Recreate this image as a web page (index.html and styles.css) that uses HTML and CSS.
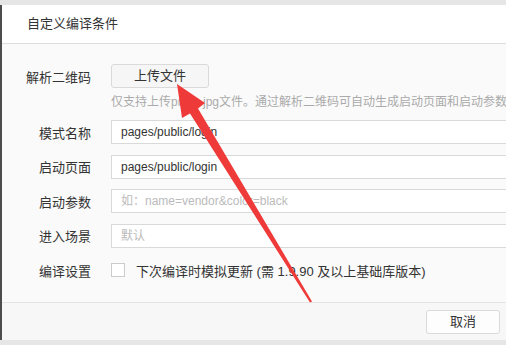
FILE: index.html
```html
<!doctype html>
<html>
<head>
    <meta charset="utf-8">
    <title>自定义编译条件</title>
    <link rel="stylesheet" href="styles.css">
</head>

<body>
<div class="dialog">
    <div class="dialog_hd">自定义编译条件</div>
    <div class="dialog_bd">
        <div class="row">
            <label class="row_label">解析二维码</label>
            <div class="row_ctrl">
                <a href="javascript:;" class="btn btn_upload">上传文件</a>
            </div>
        </div>
        <p class="hint">仅支持上传png、jpg文件。通过解析二维码可自动生成启动页面和启动参数</p>
        <div class="row">
            <label class="row_label">模式名称</label>
            <input class="ipt" type="text" value="pages/public/login">
        </div>
        <div class="row">
            <label class="row_label">启动页面</label>
            <input class="ipt" type="text" value="pages/public/login">
        </div>
        <div class="row">
            <label class="row_label">启动参数</label>
            <input class="ipt" type="text" placeholder="如：name=vendor&color=black">
        </div>
        <div class="row">
            <label class="row_label">进入场景</label>
            <input class="ipt" type="text" placeholder="默认">
        </div>
        <div class="row">
            <label class="row_label">编译设置</label>
            <div class="row_ctrl check">
                <span class="check_box"></span>
                <span>下次编译时模拟更新 (需 1.9.90 及以上基础库版本)</span>
            </div>
        </div>
    </div>
    <div class="dialog_ft">
        <a href="javascript:;" class="btn">取消</a>
    </div>
</div>

<!--标注箭头-->
<svg class="mark" width="506" height="345" viewBox="0 0 506 345">
    <polygon fill="#ef3a3a" points="177,84 205,103 198,108.5 312,301.5 310,302.5 190,113.5 182,118"/>
</svg>
</body>

</html>
```

FILE: styles.css
```css
body {
    margin: 0;
    padding: 0;
    height: 345px;
    overflow: hidden;
    background-color: #e6e6e6;
    font-family: "Liberation Sans", "Noto Sans CJK SC", sans-serif;
    font-size: 13px;
    color: #333;
    position: relative;
}

.dialog {
    width: 516px;
    margin-top: 5px;
    border-left: 2px solid #4d4d4d;
    background-color: #fafafa;
}

.dialog_hd {
    height: 38px;
    line-height: 38px;
    padding-left: 25px;
    background-color: #fff;
    border-bottom: 1px solid #dcdcdc;
}

.dialog_bd {
    padding: 20px 0 20px 23px;
    display: flex;
    flex-direction: column;
    gap: 10.5px;
}

.row {
    display: flex;
    align-items: center;
    gap: 20px;
    height: 24px;
}

.row_label {
    width: 66px;
    text-align: right;
    white-space: nowrap;
    flex-shrink: 0;
}

.row_ctrl {
    display: flex;
    align-items: center;
}

.btn {
    display: inline-block;
    height: 22px;
    line-height: 22px;
    text-align: center;
    color: #333;
    text-decoration: none;
    border: 1px solid #dadada;
    border-radius: 3px;
    background-color: #fdfdfd;
}

.btn_upload {
    width: 96px;
    background-color: #f6f6f6;
}

.hint {
    margin: -5px 0 0 86px;
    font-size: 12px;
    line-height: 16px;
    color: #aaa;
    white-space: nowrap;
}

.ipt {
    width: 480px;
    height: 24px;
    box-sizing: border-box;
    margin: 0;
    padding: 0 9px;
    border: 1px solid #d9d9d9;
    background-color: #fff;
    font-family: "Liberation Sans", "Noto Sans CJK SC", sans-serif;
    font-size: 12px;
    color: #333;
    outline: none;
}

.ipt::placeholder {
    color: #bbb;
}

.check {
    gap: 11px;
    white-space: nowrap;
}

.check_box {
    width: 12px;
    height: 12px;
    border: 1px solid #ccc;
    background-color: #fff;
}

.dialog_ft {
    height: 37px;
    border-top: 1px solid #e4e4e4;
    background-color: #f7f7f7;
    display: flex;
    align-items: center;
    justify-content: flex-end;
    padding-right: 18px;
}

.dialog_ft .btn {
    width: 72px;
}

.mark {
    position: absolute;
    left: 0;
    top: 0;
}
```
